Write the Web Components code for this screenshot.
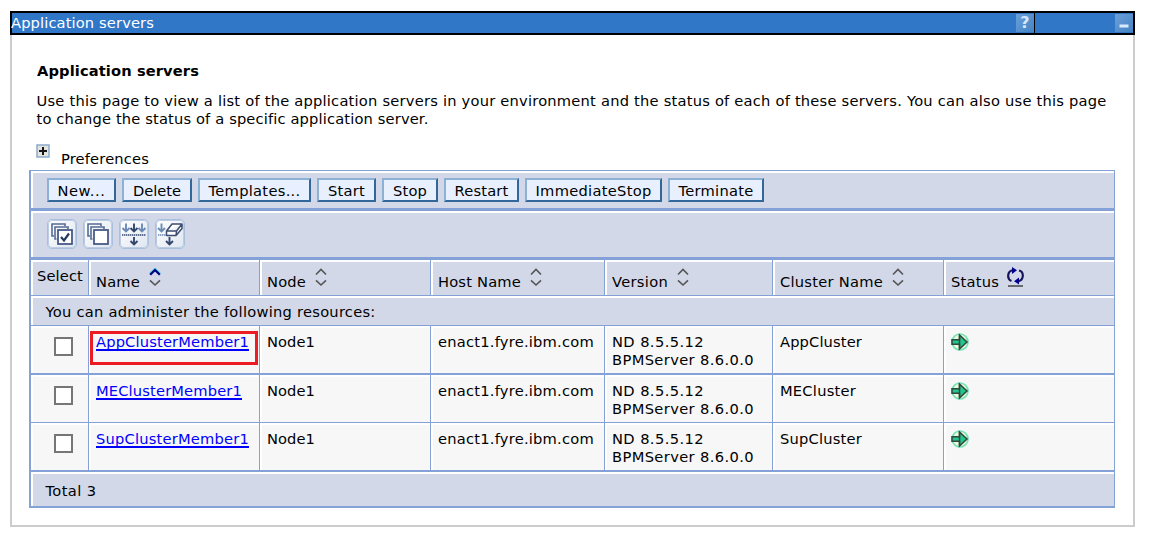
<!DOCTYPE html>
<html lang="en"><head><meta charset="utf-8"><title>Application servers</title>
<style>
html,body{margin:0;background:#fff}
body{font:14.67px/18px "DejaVu Sans",Verdana,sans-serif;color:#000;padding:11px 0 0 10px}
</style></head><body>
<server-panel></server-panel>
<script>
const define=(name,html,extra)=>customElements.define(name,class extends HTMLElement{
  constructor(){super();this.attachShadow({mode:'open'})}
  connectedCallback(){const t=document.createElement('template');t.innerHTML=typeof html==='function'?html(this):html;this.shadowRoot.replaceChildren(t.content);if(extra)extra(this)}
});
const svg=(w,h,body)=>`<svg width="${w}" height="${h}" viewBox="0 0 ${w} ${h}" fill="none">${body}</svg>`;

/* Text run set to a fixed advance width by spacing its letters. */
define('fit-text','<style>:host{display:inline-block;white-space:pre;text-decoration:inherit}</style><slot></slot>',el=>{
  el.style.letterSpacing='0px';
  const n=el.textContent.length,w=el.getBoundingClientRect().width,t=+el.getAttribute('w');
  el.style.letterSpacing=(t-w)/n+'px';
});

const pages='<path d="M7 17H5V5H18V7" stroke="#566b94" stroke-width="1.600"/><path d="M9.500 20H8V8H21V10" stroke="#566b94" stroke-width="1.600"/><rect x="11" y="11" width="14" height="14" fill="#fff" stroke="#3e5280" stroke-width="1.700"/>';
const down=(x,y,c,h=8)=>`<path d="M${x} ${y}V${y+h}M${x-3.5} ${y+h-3.5}L${x} ${y+h}L${x+3.5} ${y+h-3.5}" stroke="${c}" stroke-width="1.900"/>`;
const tools={
 all:pages+'<path d="M14 18L17 21.500L22 14.500" stroke="#26395f" stroke-width="2.200"/>',
 none:pages,
 filter:down(7,4.5,'#6c8bb4')+down(15,4.5,'#34466e')+down(23,4.5,'#6c8bb4')+'<path d="M3 16H27" stroke="#34466e" stroke-width="1.500" stroke-dasharray="1.400 .600"/>'+down(15,18,'#34466e',7.5),
 clear:down(6.5,4.5,'#6c8bb4')+'<path d="M3 16H11" stroke="#6c8bb4" stroke-width="1.500" stroke-dasharray="1.400 .600"/>'+down(14.5,18,'#34466e',7.5)+'<path d="M11.500 12L17 5H27L21.500 12ZM11.500 12V16.500H21L27 9.500V5M21.500 12L21 16.500" fill="#fff" stroke="#3d4c6e" stroke-width="1.500" stroke-linejoin="round"/>'
};
define('tool-icon',el=>`<style>:host{display:block;width:28px;height:28px;border:1px solid #a9c0dc;outline:1px solid #bccde3;outline-offset:-2px;border-radius:5px;background:linear-gradient(135deg,#fff,#dfe6f1)}svg{display:block;margin:-1px}</style>${svg(30,30,tools[el.getAttribute('kind')])}`);
define('push-button',`<style>:host{display:block;box-sizing:border-box;height:24px;border:2px solid;border-color:#8cb1d4 #336699 #336699 #8cb1d4;background:#e8f0ff;text-align:center;line-height:21px;white-space:nowrap}</style><slot></slot>`);
define('sort-arrows',el=>{const low='<path d="M1 13.300L6 18L11 13.300" stroke="#555" stroke-width="1.600"/>';return `<style>:host{display:block;width:12px;height:20px}svg{display:block}</style>${svg(12,20,el.hasAttribute('active')?'<path d="M.800 6.800L6 1.800L11.200 6.800" stroke="#48d3e8" stroke-width="2"/><path d="M1.200 7.700L6 3L10.800 7.700" stroke="#00007c" stroke-width="2.200"/>'+low:'<path d="M1 7.500L6 2.500L11 7.500" stroke="#555" stroke-width="1.600"/>'+low)}`});
define('refresh-icon',`<style>:host{display:block;width:17px;height:20px}svg{display:block}</style>${svg(17,20,'<path d="M6.500 3C-.500 4 0 12.500 4.500 14M11 14.500C17.500 13 17 4.500 12 3.500" stroke="#16165e" stroke-width="2.200"/><path d="M5 0L10 3.200L5 7ZM12 10.500L7 14.300L12 17.500Z" fill="#00008c"/><path d="M1 19H16" stroke="#444" stroke-width="1.500"/>')}`);
define('started-icon',`<style>:host{display:block;width:18px;height:18px}svg{display:block}</style>${svg(18,18,'<circle cx="9" cy="9" r="8" fill="#ecfbd9" stroke="#74e3b8" stroke-width="1.700"/><path d="M1 6.800H8.500V2L16 9L8.500 16V11.200H1Z" fill="#22c58c" stroke="#31483f" stroke-width="1.500"/><path d="M8.500 2V16" stroke="#31483f" stroke-width="1.500"/>')}`);
define('title-button',el=>`<style>:host{display:block;width:18px;height:18px;background:linear-gradient(135deg,#6ba0d8,#4483c4)}svg{display:block}span{display:block;text-align:center;font:bold 16px/18px "DejaVu Sans",sans-serif;color:#d5e8fa}</style>${el.getAttribute('kind')==='help'?'<span>?</span>':svg(18,18,'<path d="M4.500 12H13.500" stroke="#d8eafb" stroke-width="3"/>')}`);
define('check-box','<style>:host{display:block;box-sizing:border-box;width:19px;height:19px;border:2px solid #767676;background:#fff}</style>');
define('expand-icon',`<style>:host{display:block;width:14px;height:14px}svg{display:block}</style>${svg(14,14,'<rect x="1" y="1" width="12" height="12" fill="#e3e3e0" stroke="#8caacb" stroke-width="1.500"/><path d="M3 7H11M7 3V11" stroke="#151515" stroke-width="2"/>')}`);

/* A cell has a blue line before it and a white inner edge on its top and left. */
define('grid-cell',`<style>:host{display:block;box-sizing:border-box;border-left:1px solid #84a2d8;min-width:0}
:host(:first-child){border-left-width:2px}
.c{box-sizing:border-box;height:100%;border:2px solid #fff;border-width:2px 0 0 2px;background:var(--bg,#d2d8e8);position:relative}</style><div class="c"><slot></slot></div>`);
define('grid-row',el=>`<style>:host{display:grid;box-sizing:border-box;height:${el.getAttribute('h')}px;border-bottom:${el.getAttribute('line')}px solid #84a2d8;grid-template-columns:${el.hasAttribute('wide')?'1fr':'59px 171px 171px 174px 168px 171px 1fr'}}</style><slot></slot>`);
define('head-label',`<style>:host{display:flex;gap:9px;padding:5px 0 0 5px}::slotted(fit-text){margin-top:6px}</style><slot></slot>`);

const T=(w,t)=>`<fit-text w="${w}">${t}</fit-text>`;
const head=(w,t,icon)=>`<grid-cell><head-label>${T(w,t)}${icon}</head-label></grid-cell>`;
const rows=[['AppClusterMember1','AppCluster',153,82,2],['MEClusterMember1','MECluster',146,76,1],['SupClusterMember1','SupCluster',153,82,2]];
const body=rows.map(([m,c,mw,cw,l],i)=>`<grid-row class="data" h="${[49,48,49][i]}" line="${l}"><grid-cell><check-box></check-box></grid-cell>
<grid-cell><p class="link"><a href="#">${T(mw,m)}</a></p>${i?'':'<i class="mark"></i>'}</grid-cell>
<grid-cell><p>${T(48,'Node1')}</p></grid-cell><grid-cell><p>${T(156,'enact1.fyre.ibm.com')}</p></grid-cell>
<grid-cell><p>${T(92,'ND 8.5.5.12')}<br>${T(142,'BPMServer 8.6.0.0')}</p></grid-cell>
<grid-cell><p>${T(cw,c)}</p></grid-cell><grid-cell><started-icon></started-icon></grid-cell></grid-row>`).join('');

define('server-table',`<style>
:host{display:block;border-top:1px solid #84a2d8;border-right:1px solid #84a2d8;width:1085px}
.bar{display:flex}
.buttons{gap:6px;padding:5px 0 0 14px}
.tools{gap:6px;padding:6px 0 0 14px}
p{margin:5px 0 0 5px;line-height:18px}
fit-text{vertical-align:top}
.link{width:max-content}
a{color:#00f;text-decoration:none;display:block;height:16px;border-bottom:2px solid #00f;line-height:18px}
.data{--bg:#f7f7f7}
check-box{margin:9px 0 0 21px}
started-icon{margin:5px 0 0 5px}
.note{padding:5px 0 0 12.500px}
.total{padding:8px 0 0 12.500px}
.sel{padding:5px 0 0 4px}
.mark{position:absolute;left:-1px;top:3px;width:162px;height:28px;border:3px solid #ed1c24}
refresh-icon{margin-left:-1px}
</style>
<grid-row wide h="40" line="3"><grid-cell><div class="bar buttons">
${[['New...',69,48],['Delete',70,48],['Templates...',113,92],['Start',59,37],['Stop',56,34],['Restart',75,54],['ImmediateStop',137,116],['Terminate',96,75]].map(b=>`<push-button style="width:${b[1]}px">${T(b[2],b[0])}</push-button>`).join('')}
</div></grid-cell></grid-row>
<grid-row wide h="49" line="3"><grid-cell><div class="bar tools"><tool-icon kind="all"></tool-icon><tool-icon kind="none"></tool-icon><tool-icon kind="filter"></tool-icon><tool-icon kind="clear"></tool-icon></div></grid-cell></grid-row>
<grid-row h="36" line="1"><grid-cell><div class="sel">${T(46,'Select')}</div></grid-cell>
${head(44,'Name','<sort-arrows active></sort-arrows>')}${head(39,'Node','<sort-arrows></sort-arrows>')}${head(83,'Host Name','<sort-arrows></sort-arrows>')}${head(56,'Version','<sort-arrows></sort-arrows>')}${head(103,'Cluster Name','<sort-arrows></sort-arrows>')}${head(48,'Status','<refresh-icon></refresh-icon>')}</grid-row>
<grid-row wide h="30" line="1"><grid-cell><div class="note">${T(330,'You can administer the following resources:')}</div></grid-cell></grid-row>
${body}
<grid-row wide h="36" line="2"><grid-cell><div class="total">${T(51,'Total 3')}</div></grid-cell></grid-row>`);

define('title-bar',`<style>:host{display:flex;box-sizing:border-box;height:24px;border:2px solid #000;background:#3077c8;color:#fff;margin:0 -2px;line-height:20px}
.t{flex:1;margin-left:-1px}.help{border-right:1px solid #000;height:20px;box-sizing:border-box;padding:1px 0 0}.min{width:98px;display:flex;justify-content:flex-end;padding-top:1px}</style>
<div class="t">${T(143,'Application servers')}</div><div class="help"><title-button kind="help"></title-button></div><div class="min"><title-button kind="min"></title-button></div>`);
define('server-panel',`<style>
:host{display:block;box-sizing:border-box;width:1125px;height:516px;border:2px solid #ccc;border-top:0}
h1{font-size:inherit;line-height:18px;margin:27px 0 0 25px}
.intro{margin:12px 0 0 24.500px}
.pref{display:flex;gap:11px;margin:16px 0 0 24px;height:26px}
.pref fit-text{margin-top:6px}
server-table{margin-left:17px}
fit-text{vertical-align:top}
</style><title-bar></title-bar><h1>${T(162,'Application servers')}</h1>
<div class="intro">${T(1070,'Use this page to view a list of the application servers in your environment and the status of each of these servers. You can also use this page')}<br>${T(392,'to change the status of a specific application server.')}</div>
<div class="pref"><expand-icon></expand-icon>${T(88,'Preferences')}</div>
<server-table></server-table>`);
</script></body></html>
